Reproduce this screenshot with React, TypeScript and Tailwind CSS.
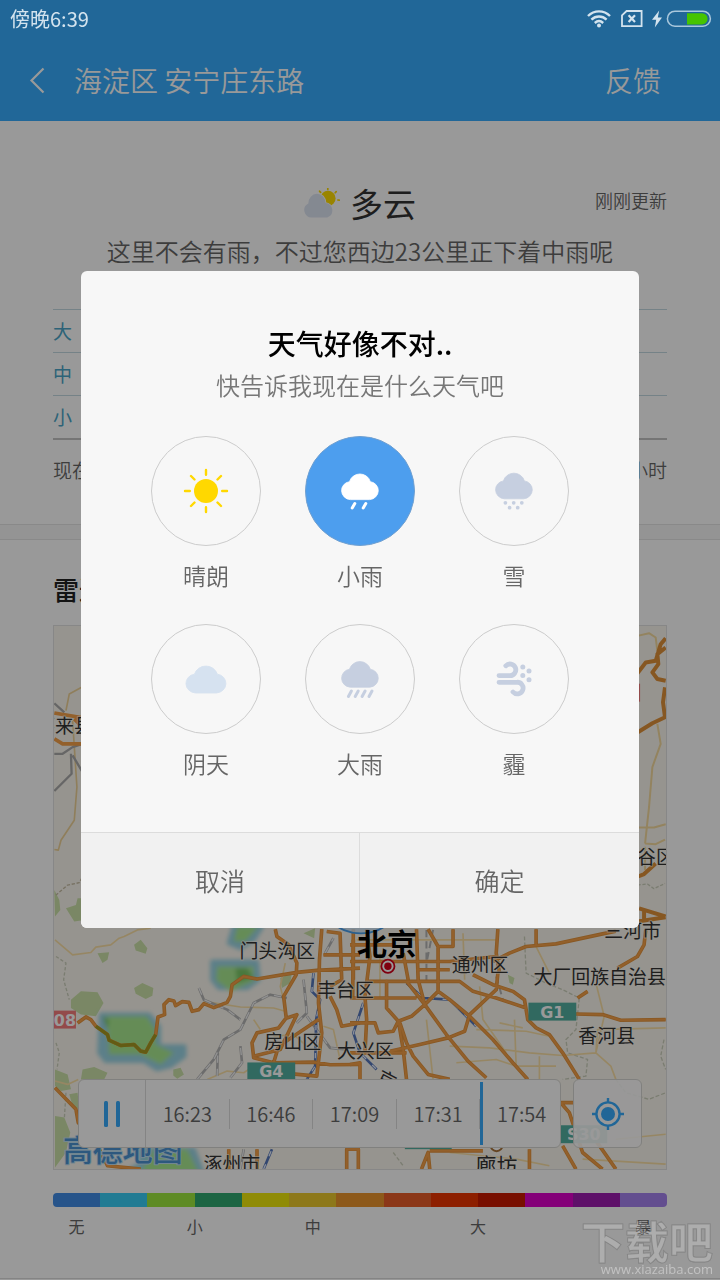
import { useState } from "react";
import type { ReactNode } from "react";

/* ---------- status bar ---------- */

function StatusBar() {
  return (
    <div className="relative z-20 flex h-[38px] items-center justify-between pr-2 pl-[10px] text-[#d3e3ee]">
      <span className="text-xl leading-6">傍晚6:39</span>
      <div className="flex items-center">
        <svg viewBox="0 0 24 18" className="h-[18px] w-6" fill="none" stroke="currentColor" strokeWidth="2.4">
          <path d="M1 6C7.2-.2 16.8-.2 23 6" />
          <path d="M4.4 9.6c4.4-4.2 10.8-4.2 15.2 0" />
          <path d="M7.8 13c2.6-2.4 5.8-2.4 8.4 0" />
          <circle cx="12" cy="15.4" r="2" fill="currentColor" stroke="none" />
        </svg>
        <svg viewBox="0 0 22 18" className="ml-[10px] h-[18px] w-[22px]" fill="none" stroke="currentColor" strokeWidth="1.8">
          <path d="M5.6 1H20.6V16.2H1V5.4Z" />
          <path d="M7.6 5.2 14 12M14 5.2 7.6 12" strokeWidth="2.2" />
        </svg>
        <svg viewBox="0 0 10 18" className="ml-[9px] h-[18px] w-[10px]" fill="currentColor">
          <path d="M7.2 .4 0 9.8h4.2L2.8 17.6 10 7.4H5.8Z" />
        </svg>
        <svg viewBox="0 0 46 18" className="ml-1 h-[18px] w-[46px]">
          <rect x="1.4" y="1.2" width="43" height="15" rx="7.5" fill="none" stroke="#a9c7dc" strokeWidth="1.5" />
          <path d="M21 3.2H36a5.6 5.6 0 0 1 0 11.2H21Z" fill="#46c400" />
        </svg>
      </div>
    </div>
  );
}

function TitleBar() {
  return (
    <div className="flex h-[83px] items-center pr-[59px] pl-7 text-[28px] leading-9 font-[350] text-white">
      <button type="button" aria-label="返回" className="mr-7 w-[18px]">
        <svg viewBox="0 0 18 28" className="h-7 w-[18px]" fill="none" stroke="currentColor" strokeWidth="2.2">
          <path d="M15.5 2.5 3.5 14.5 15.5 26.5" />
        </svg>
      </button>
      <h1 className="flex-1">海淀区 安宁庄东路</h1>
      <button type="button">反馈</button>
    </div>
  );
}

/* ---------- forecast ---------- */

function PartlyCloudyIcon() {
  return (
    <svg viewBox="0 0 36 30" className="h-[30px] w-9">
      <circle cx="24" cy="10.4" r="7.6" fill="#ffdc00" />
      <g stroke="#ffdc00" strokeWidth="1.7" strokeLinecap="round">
        <path d="M23.8 .4v1M15.6 3.2l1 1.2M32.2 3.6l-1 1.2M33.8 12l1.4.2" />
      </g>
      <path
        d="M8.2 29.4A7.4 7.4 0 0 1 4.4 15.4 8.6 9.4 0 1 1 21.6 15 7.4 7.4 0 0 1 23.2 29.4Z"
        fill="#dde4f2"
        stroke="#fff"
        strokeWidth="1.6"
        paintOrder="stroke"
      />
    </svg>
  );
}

const levels = ["大", "中", "小"];

function Forecast() {
  return (
    <section className="px-[53px] pt-[58px] pb-[38px]">
      <div className="grid h-12 grid-cols-[1fr_auto_1fr] items-center">
        <span />
        <h2 className="flex items-center gap-[10px] text-[33px] leading-10 text-[#333]">
          <PartlyCloudyIcon />
          多云
        </h2>
        <span className="pb-[6px] text-right text-[18px] leading-6 font-[350] text-[#666]">刚刚更新</span>
      </div>
      <p className="mt-2 text-center text-2xl leading-8 font-[350] whitespace-nowrap text-[#666]">
        这里不会有雨，不过您西边23公里正下着中雨呢
      </p>
      <ul className="mt-[42px] border-b-2 border-[#c4c4c4] text-[19px] text-[#4ba6c8]">
        {levels.map((level) => (
          <li key={level} className="flex h-[43px] items-center border-t border-[#c3d9e2]">
            {level}
          </li>
        ))}
      </ul>
      <div className="mt-[14px] flex justify-between text-[19px] leading-8 font-[350] text-[#666]">
        <span>现在</span>
        <span>1小时</span>
      </div>
    </section>
  );
}

/* ---------- radar map ---------- */

const westRoads =
  "M110 310 135 292 150 300 165 320 200 345 205 362 240 378 280 375 300 395 315 398 330 370 345 345 352 292 372 285 370 255 385 240 400 244 405 258 425 246 445 248 455 275 475 270 490 252 520 264 560 248 570 230 575 195 610 170 650 178 770 158 830 152 960 145M705 28 710 50 745 75 770 130 768 165 730 230 738 295 715 325 650 340 635 370 640 415 700 430 820 428 870 436 960 435M845 28 838 120 835 250 845 340 830 470 740 462M42 505 105 570 112 610 170 680 200 740 300 750M850 105H960M860 35 900 40 905 180 870 200M940 60V180M870 230 890 270 905 320 960 310M640 410 720 390 770 285 740 295M700 430 715 380 835 300M565 690V750M650 690V750M920 750V690H960";
const eastRoads =
  "M0 125H300L440 110M200 150H300M0 75H130M50 185H330L370 215 440 235 530 265M445 28 440 100 450 160M430 125 480 100 530 80 620 72 760 42 800 34M370 165 430 195 490 215 525 240 535 300 560 325 600 345 640 400 690 480M680 283 760 285 815 302 950 300M0 235H200M170 185 225 255 290 345 355 425 410 475M265 215 300 240 360 290 430 360 490 430 535 480M445 160 440 210 360 285 345 335 295 355 210 375 120 395M110 180V265L150 310 170 370 190 410 235 465 300 480M10 28 8 230M50 28 60 110 45 230 50 300 45 400M145 300 160 390 170 480M0 310H75L85 340 130 335 145 305 185 290 225 255 265 215 265 80 235 28M200 28 205 180 225 255M160 100 175 180M560 28V75M890 30 885 75 865 110 805 145M685 235 715 215M310 28V80H265M0 435 30 430 30 480M0 400H170M215 750 235 700 240 750M540 690V750M635 550H675M635 551 660 580 680 640 700 700 760 750M640 680 680 750M730 650 800 750M0 690H25V750M240 695H400";
const westMinor =
  "M42 60 95 105 150 98 165 82 210 75 235 55 250 50 290 30 330 25M490 245 600 262 700 265 735 275M500 480 560 455 610 460 640 440M660 330 640 300M735 130 720 200 735 260M850 320 880 330 900 420M700 350 760 345 800 380M42 485 80 495 112 480";
const eastMinor =
  "M20 60H440M90 100V235M340 40 345 180M230 300 250 480M380 330 530 335 600 350M300 380 420 385 540 400 640 408 740 400 745 330 950 325M390 200 400 300 470 400M495 300 500 440H620M570 410V480M450 310 520 325M740 190 765 290 740 400 785 440 800 480M800 660 950 645M300 700 500 720 600 740M560 80 600 160M700 720 950 735M320 430 440 420 500 440";
const rails =
  "M470 480 520 420 550 360 600 330 640 250 690 225 740 235M530 470 532 400M570 475 605 430 600 380M790 180 800 280 770 310M800 290 870 385 920 390M855 100 880 55M475 205 490 240 560 270 600 300M600 750 610 690";
const canals =
  "M820 160 815 215 840 240 828 300 825 440 800 480M970 250 940 340 960 400 1010 450M670 750 695 690M1100 190 1150 235 1230 240 1310 320";

function Tag({ x, y, w, label, red }: { x: number; y: number; w: number; label: string; red?: boolean }) {
  return (
    <g>
      <rect x={x} y={y} width={w} height="18" fill={red ? "#f57c7c" : "#52afa0"} />
      <text
        x={x + w / 2}
        y={y + 15}
        textAnchor="middle"
        fill="#fff"
        className="font-['DejaVu_Sans',sans-serif] text-[16px] font-bold"
      >
        {label}
      </text>
    </g>
  );
}

const places = [
  { name: "怀来县", x: 35, y: 732 },
  { name: "平谷区", x: 619, y: 864 },
  { name: "三河市", x: 605, y: 938 },
  { name: "门头沟区", x: 239, y: 958 },
  { name: "丰台区", x: 317, y: 997 },
  { name: "通州区", x: 452, y: 972 },
  { name: "大厂回族自治县", x: 534, y: 984 },
  { name: "香河县", x: 579, y: 1043 },
  { name: "房山区", x: 264, y: 1049 },
  { name: "大兴区", x: 337, y: 1059 },
  { name: "涿州市", x: 203, y: 1172 },
];

function MapDrawing() {
  return (
    <svg
      viewBox="53 625 614 545"
      preserveAspectRatio="xMidYMid slice"
      className="absolute inset-0 size-full"
      fill="none"
      strokeLinejoin="round"
    >
      <defs>
        <filter id="haze" x="-20%" y="-20%" width="140%" height="140%">
          <feGaussianBlur stdDeviation="7" />
        </filter>
      </defs>
      <rect x="53" y="625" width="614" height="545" fill="#fbf7ee" />

      <g transform="translate(40 920) scale(.33333)">
        <g fill="#cbe2a8">
          <path d="M90 240 120 215 170 218 188 250 165 290 120 285 90 265ZM280 205 305 190 338 205 335 228 315 238 285 222ZM170 100 205 97 200 120 185 130ZM280 75 300 60 320 85 315 102 285 92ZM42 590 70 595 88 640 75 700 42 745ZM125 450 160 443 200 460 190 480 120 480ZM42 450 80 465 90 510 60 515 42 500ZM398 450 420 445 430 465 410 478 398 468ZM720 175 755 160 750 190 725 205ZM85 525 110 520 115 570 95 560ZM790 40 825 25 822 55ZM1405 165 1425 175 1420 195 1410 190Z" />
        </g>
        <g filter="url(#haze)">
          <path
            d="M180 285H325L355 320V380H432V410L390 440 350 450 310 425H195L175 400ZM515 125H650L655 180 620 205H535L515 180ZM580 20H665L640 60 600 85 565 70ZM235 770 300 735V690H460L490 770Z"
            fill="#9ad4e4"
            stroke="#9ad4e4"
            strokeWidth="12"
          />
          <path d="M198 290H318L345 330V375L400 400 360 435 300 405H205ZM530 140H640V185L570 215 527 182ZM590 20H655L615 65 580 65ZM300 760 340 690H440L475 760Z" fill="#a9ea90" />
          <path d="M585 145H620L640 175 590 190ZM185 290 205 300 200 330Z" fill="#7ac866" />
        </g>
        <path d="M45 110 75 130 68 180 85 240M45 370 55 400 48 450M75 520 70 600" stroke="#ccd0bd" strokeWidth="4" strokeDasharray="10 6" />
        <g transform="translate(930 0)" stroke="#ccd0bd" strokeWidth="4" strokeDasharray="12 6">
          <path d="M525 50 530 160 590 190 640 210 690 235 680 330 650 360 655 400 715 420 710 470 640 480M800 480 830 520 900 540 950 520M945 360 935 410 950 450M130 700 160 740" />
        </g>
        <g stroke="#fbe0a6" strokeWidth="5">
          <path d={westMinor} />
          <path d={eastMinor} transform="translate(930 0)" />
        </g>
        <path d={rails} stroke="#b4b4b4" strokeWidth="8" />
        <path d={rails} stroke="#f2f2f2" strokeWidth="4" strokeDasharray="22 18" />
        <path d="M1160 30V200M1180 30 1162 120M1370 170 1390 240" stroke="#b4b4b4" strokeWidth="6" strokeDasharray="22 12" />
        <path d={canals} stroke="#5677bb" strokeWidth="8" />
        <path d={canals} stroke="#e8eefc" strokeWidth="4" strokeDasharray="16 26" />
        <g stroke="#e3933c" strokeWidth="11">
          <path d={westRoads} />
          <path d={eastRoads} transform="translate(930 0)" />
        </g>
        <g stroke="#f5a048" strokeWidth="6">
          <path d={westRoads} />
          <path d={eastRoads} transform="translate(930 0)" />
        </g>
        <path d="M165 320 200 345 205 362 240 378 280 375 300 395 315 398 330 370 345 345" stroke="#a59a22" strokeWidth="10" />
      </g>

      <g transform="translate(0 520) scale(.33333)">
        <path d="M160 1110 175 1140 178 1170 162 1190ZM195 1165 225 1155 230 1135 250 1135V1200L220 1205Z" fill="#cbe2a8" />
        <path d="M245 498 205 520 195 570M215 600 228 800 220 900 180 960 172 990 160 988" stroke="#efd398" strokeWidth="5" />
        <path d="M250 1060 235 1088 200 1095 165 1125" stroke="#c6bda4" strokeWidth="4" strokeDasharray="10 5" />
        <path d="M160 548 190 575M160 700H185L215 680 245 670M210 700 212 760 160 812M215 705 245 755" stroke="#aaa" strokeWidth="7" />
        <path d="M160 577 245 592M160 655 185 670H245M220 595 235 610" stroke="#f5a048" strokeWidth="11" />
      </g>
      <g transform="translate(630 520) scale(.33333)">
        <path d="M25 345 60 337 80 350 85 390M85 610 95 670 70 740 60 860 48 970M25 922 75 922 110 912M48 970 80 972 108 958M48 980V1050" stroke="#f5db9e" strokeWidth="6" />
        <path d="M25 1095 55 1092 75 1106 108 1090" stroke="#ccd0bd" strokeWidth="4" strokeDasharray="10 5" />
        <path d="M25 458 50 425 80 420 95 370 110 352M110 380 85 400 88 430 70 455 85 475 110 480M108 500 102 545 108 590 70 608 25 636M25 1070 45 1062 80 1030M30 1165 110 1190M45 1170 45 1205M25 1205 110 1192" stroke="#e0913a" strokeWidth="12" />
      </g>

      <Tag x={53} y={1011} w={22} label="08" red />
      <rect x="630" y="683" width="11" height="18" fill="#f57c7c" />
      <Tag x={247} y={1063} w={48} label="G4" />
      <Tag x={529} y={1003} w={48} label="G1" />
      <Tag x={561} y={1126} w={47} label="S30" />
      <rect x="405" y="1132" width="47" height="18" fill="#52afa0" />

      <circle cx="361" cy="889" r="44.5" fill="#cfe6fa" fillOpacity=".8" stroke="#49a0ee" strokeWidth="1.6" />

      <g fill="#333" stroke="#fbf7ee" strokeWidth="2" strokeOpacity=".6" paintOrder="stroke" className="text-[19px]">
        {places.map((place) => (
          <text key={place.name} x={place.x} y={place.y}>
            {place.name}
          </text>
        ))}
        <text x="476" y="1174" className="text-[21px]">
          廊坊
        </text>
        <text x="375" y="1082" transform="rotate(28 375 1082)">
          京
        </text>
      </g>
      <text x="357" y="955" fill="#000" className="text-[30px] font-bold">
        北京
      </text>
      <circle cx="388" cy="966.5" r="6.6" fill="#fff" stroke="#d4001a" strokeWidth="1.8" />
      <circle cx="388" cy="966.5" r="3.7" fill="#d4001a" />
      <circle cx="497" cy="1146" r="6" fill="#fff" stroke="#a8733a" strokeWidth="2" />
      <circle cx="497" cy="1146" r="2.4" fill="#a8733a" />
      <text
        x="62"
        y="1162"
        fill="#4b93d2"
        stroke="#bfe0f2"
        strokeWidth="2"
        paintOrder="stroke"
        className="text-[30px] font-medium"
      >
        高德地图
      </text>
    </svg>
  );
}

const times = ["16:23", "16:46", "17:09", "17:31", "17:54"];

function RadarMap() {
  return (
    <div className="relative mt-4 h-[545px] overflow-hidden border border-[#e2e2e2]">
      <MapDrawing />
      <div className="absolute inset-x-6 bottom-[21px] flex h-[69px] gap-3">
        <div className="flex flex-1 rounded-md border border-[#d6d6d2] bg-white">
          <button type="button" aria-label="暂停" className="flex w-[67px] items-center justify-center border-r border-[#ddd]">
            <svg viewBox="0 0 16 26" className="h-[26px] w-4" fill="#38abfc">
              <rect x="0" y="0" width="4" height="26" rx="1.5" />
              <rect x="12" y="0" width="4" height="26" rx="1.5" />
            </svg>
          </button>
          <ol className="relative -mr-[3px] flex flex-1 items-center">
            {times.map((time) => (
              <li
                key={time}
                className="flex h-[30px] flex-1 items-center justify-center border-r border-[#ddd] text-xl font-[350] text-[#666] nth-[5]:border-r-0"
              >
                {time}
              </li>
            ))}
            <li aria-hidden="true" className="absolute inset-y-[2px] left-[80%] w-[3px] bg-[#38abfc]" />
          </ol>
        </div>
        <button
          type="button"
          aria-label="定位"
          className="flex w-[69px] items-center justify-center rounded-md border border-[#d6d6d2] bg-white/90"
        >
          <svg viewBox="-16 -16 32 32" className="size-8" fill="none" stroke="#38abfc" strokeWidth="2.4">
            <circle r="11.6" />
            <circle r="7" fill="#38abfc" stroke="none" />
            <path d="M0-16V-11M0 16V11M-16 0H-11M16 0H11" />
          </svg>
        </button>
      </div>
    </div>
  );
}

const scale = [
  "bg-[#418ce6]",
  "bg-[#38cdf5]",
  "bg-[#9de83f]",
  "bg-[#30a870]",
  "bg-[#eee80a]",
  "bg-[#ecc92c]",
  "bg-[#ec942c]",
  "bg-[#e85c28]",
  "bg-[#ec3400]",
  "bg-[#c81900]",
  "bg-[#dc00c8]",
  "bg-[#9d1cb0]",
  "bg-[#a582ee]",
];

function Radar() {
  return (
    <section className="border-b border-[#dcdcdc] px-[53px] pt-[29px] pb-10">
      <h2 className="text-[26px] leading-10 font-medium text-[#222]">雷达图</h2>
      <RadarMap />
      <div className="mt-[23px] flex h-[14px] overflow-hidden rounded-sm">
        {scale.map((tone) => (
          <span key={tone} className={`flex-1 ${tone}`} />
        ))}
      </div>
      <div className="mt-[7px] grid grid-cols-[repeat(26,minmax(0,1fr))] text-center text-base leading-6 text-[#666]">
        <span className="col-span-2 col-start-1">无</span>
        <span className="col-span-2 col-start-6">小</span>
        <span className="col-span-2 col-start-11">中</span>
        <span className="col-span-2 col-start-18">大</span>
        <span className="col-span-2 col-start-25">暴</span>
      </div>
    </section>
  );
}

/* ---------- weather report dialog ---------- */

const cloud = (
  <path d="M-10 9A9 9 0 0 1-10.6-8.9 11 11 0 0 1 10.4-8.9 9 9 0 0 1 10 9Z" fill="currentColor" stroke="currentColor" strokeWidth=".8" />
);

const options: { name: string; tint: string; icon: ReactNode }[] = [
  {
    name: "晴朗",
    tint: "text-[#ffd800]",
    icon: (
      <>
        <circle r="12" fill="currentColor" stroke="none" />
        <path
          d="M0-16.2V-21M0 16.2V21M-16.2 0H-21M16.2 0H21M-11.5-11.5-15-15M11.5-11.5 15-15M-11.5 11.5-15 15M11.5 11.5 15 15"
          strokeWidth="2.4"
        />
      </>
    ),
  },
  {
    name: "小雨",
    tint: "text-[#c6cfe0]",
    icon: (
      <>
        <g transform="translate(0 -.4)">{cloud}</g>
        <path d="M-5.2 12.6-7.8 17M5.8 12.6 3.2 17" strokeWidth="3" />
      </>
    ),
  },
  {
    name: "雪",
    tint: "text-[#c6cfe0]",
    icon: (
      <>
        <g transform="translate(0 -1.2)">{cloud}</g>
        <path d="M-8.6 11.8h0M-.3 11.8h0M7.8 11.8h0M-4.4 16.7h0M3.7 16.7h0" strokeWidth="3.8" />
      </>
    ),
  },
  {
    name: "阴天",
    tint: "text-[#d6e2f0]",
    icon: <g transform="translate(0 4.5) scale(1.09 1.05)">{cloud}</g>,
  },
  {
    name: "大雨",
    tint: "text-[#c6cfe0]",
    icon: (
      <>
        <g transform="translate(0 -.8)">{cloud}</g>
        <path d="M-8.6 12-11.6 17.4M-1.8 12-4.8 17.4M5.1 12 2.1 17.4M12 12 9 17.4" strokeWidth="3" />
      </>
    ),
  },
  {
    name: "霾",
    tint: "text-[#c6cfe0]",
    icon: (
      <>
        <path d="M-15-3.4H-4.4A5.8 5.8 0 1 0-8.2-13.2M-15 3.3H2.8A5.8 5.8 0 1 1-1 13" strokeWidth="4.8" />
        <path d="M8.8-12h0M15-8h0M8.8-3.4h0M15 .7h0" strokeWidth="5" />
      </>
    ),
  },
];

function ReportDialog() {
  const [picked, setPicked] = useState("小雨");
  return (
    <div className="fixed inset-0 z-10 bg-black/40 px-[81px] pt-[271px]">
      <div role="dialog" aria-labelledby="report-title" className="overflow-hidden rounded-md bg-[#f7f7f7]">
        <h2 id="report-title" className="pt-[54px] text-center text-[28px] leading-9 font-medium text-black">
          天气好像不对..
        </h2>
        <p className="mt-2 text-center text-2xl leading-8 font-[350] text-[#777]">快告诉我现在是什么天气吧</p>
        <div className="mt-[35px] grid grid-cols-3 gap-y-8 px-12 pb-[52px]">
          {options.map(({ name, tint, icon }) => (
            <label key={name} className="relative flex flex-col items-center">
              <input
                type="radio"
                name="weather"
                value={name}
                checked={picked === name}
                onChange={() => setPicked(name)}
                className="peer sr-only"
              />
              <span
                className={`flex size-[110px] items-center justify-center rounded-full border border-[#ccc] peer-checked:border-[#6f9fd0] peer-checked:bg-[#4d9eee] peer-checked:text-white ${tint}`}
              >
                <svg viewBox="-28 -28 56 56" className="size-14" fill="none" stroke="currentColor" strokeLinecap="round">
                  {icon}
                </svg>
              </span>
              <span className="mt-3 text-[23px] leading-[34px] font-[350] text-[#666]">{name}</span>
            </label>
          ))}
        </div>
        <div className="grid h-24 grid-cols-2 border-t border-[#dcdcdc] bg-[#f1f1f1] text-[25px] font-[350] text-[#666]">
          <button type="button" className="border-r border-[#dcdcdc]">
            取消
          </button>
          <button type="button">确定</button>
        </div>
      </div>
    </div>
  );
}

function Watermark() {
  return (
    <div className="pointer-events-none absolute right-[7px] bottom-1 z-30 flex flex-col items-end">
      <span className="text-[44px] leading-[44px] font-bold text-white/20 [-webkit-text-stroke:1px_rgb(70_70_70/0.3)]">
        下载吧
      </span>
      <span className="font-['Open_Sans',sans-serif] text-[13px] leading-[14px] text-white/40">www.xiazaiba.com</span>
    </div>
  );
}

export default function App() {
  return (
    <div className="relative min-h-screen bg-white font-['Noto_Sans_CJK_SC',sans-serif]">
      <header className="bg-[#37acfe]">
        <StatusBar />
        <TitleBar />
      </header>
      <main>
        <Forecast />
        <div className="h-4 border-y border-[#e4e4e4] bg-[#f7f7f7]" />
        <Radar />
      </main>
      <ReportDialog />
      <Watermark />
    </div>
  );
}
